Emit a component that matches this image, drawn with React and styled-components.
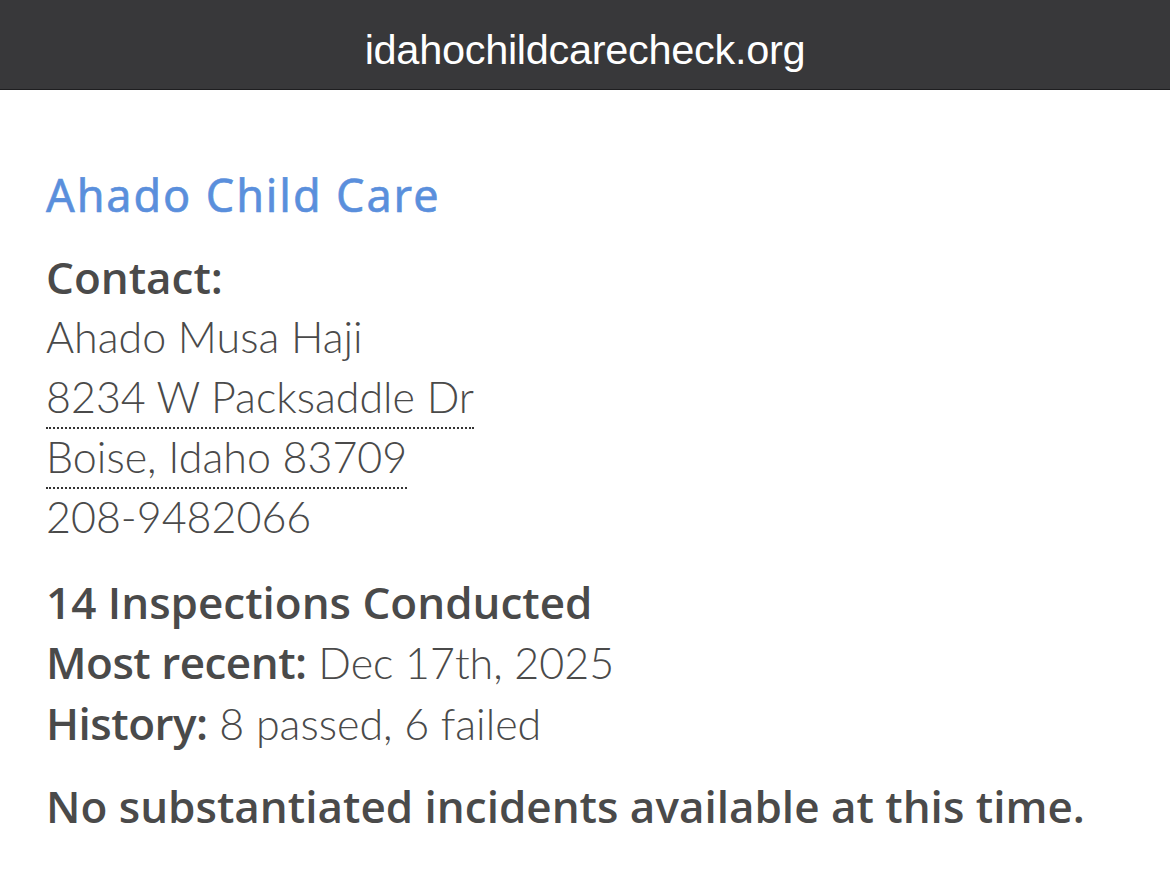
import React from "react";
import styled, { createGlobalStyle } from "styled-components";

const Global = createGlobalStyle`
  html, body { margin: 0; padding: 0; background: #ffffff; }
  body { font-family: "Lato", "Noto Sans", sans-serif; color: #4a4a4a; }
`;

const Page = styled.div`
  width: 1170px;
  min-height: 871px;
  background: #fff;
`;

const AddressBar = styled.header`
  height: 90px;
  background: #38383a;
  border-bottom: 1px solid #1e1e20;
  display: flex;
  align-items: center;
  justify-content: center;
  box-sizing: border-box;
`;

const Domain = styled.span`
  font-family: "Liberation Sans", Arial, sans-serif;
  font-size: 41.5px;
  color: #ffffff;
  letter-spacing: -0.3px;
  padding-top: 10px;
`;

const Content = styled.main`
  padding: 75px 46px 0 46px;
  display: flex;
  flex-direction: column;
`;

const Title = styled.h1`
  margin: 0;
  font-family: "Noto Sans", "Open Sans", sans-serif;
  font-weight: 400;
  font-size: 45px;
  line-height: 60px;
  color: #5a8fdc;
  letter-spacing: 1.9px;
  -webkit-text-stroke: 0.6px #5a8fdc;
`;

const Section = styled.section`
  margin-top: ${(p) => p.$gap}px;
  display: flex;
  flex-direction: column;
  align-items: flex-start;
`;

const Line = styled.div`
  font-family: ${(p) => (p.$bold ? '"Open Sans", "Lato", sans-serif' : '"Lato", sans-serif')};
  font-size: ${(p) => (p.$bold ? 44 : 43)}px;
  line-height: 60px;
  font-weight: ${(p) => (p.$bold ? 600 : 300)};
  color: #4a4a4a;
  white-space: nowrap;
`;

const Label = styled.span`
  font-family: "Open Sans", "Lato", sans-serif;
  font-size: 44px;
  font-weight: 600;
  letter-spacing: -0.5px;
`;

const AddressLink = styled.span`
  display: inline-block;
  font-family: "Lato", sans-serif;
  font-size: 43px;
  font-weight: 300;
  line-height: 60px;
  color: #4a4a4a;
  border-bottom: 2px dotted #333;
  margin-bottom: -2px;
  white-space: nowrap;
`;

export default function App() {
  return (
    <Page>
      <Global />
      <AddressBar>
        <Domain>idahochildcarecheck.org</Domain>
      </AddressBar>
      <Content>
        <Title>Ahado Child Care</Title>
        <Section $gap={22}>
          <Line $bold>Contact:</Line>
          <Line>Ahado Musa Haji</Line>
          <AddressLink>8234 W Packsaddle Dr</AddressLink>
          <AddressLink>Boise, Idaho 83709</AddressLink>
          <Line>208-9482066</Line>
        </Section>
        <Section $gap={25}>
          <Line $bold>14 Inspections Conducted</Line>
          <Line>
            <Label>Most recent:</Label> Dec 17th, 2025
          </Line>
          <Line>
            <Label>History:</Label> 8 passed, 6 failed
          </Line>
        </Section>
        <Section $gap={22}>
          <Line $bold>No substantiated incidents available at this time.</Line>
        </Section>
      </Content>
    </Page>
  );
}
